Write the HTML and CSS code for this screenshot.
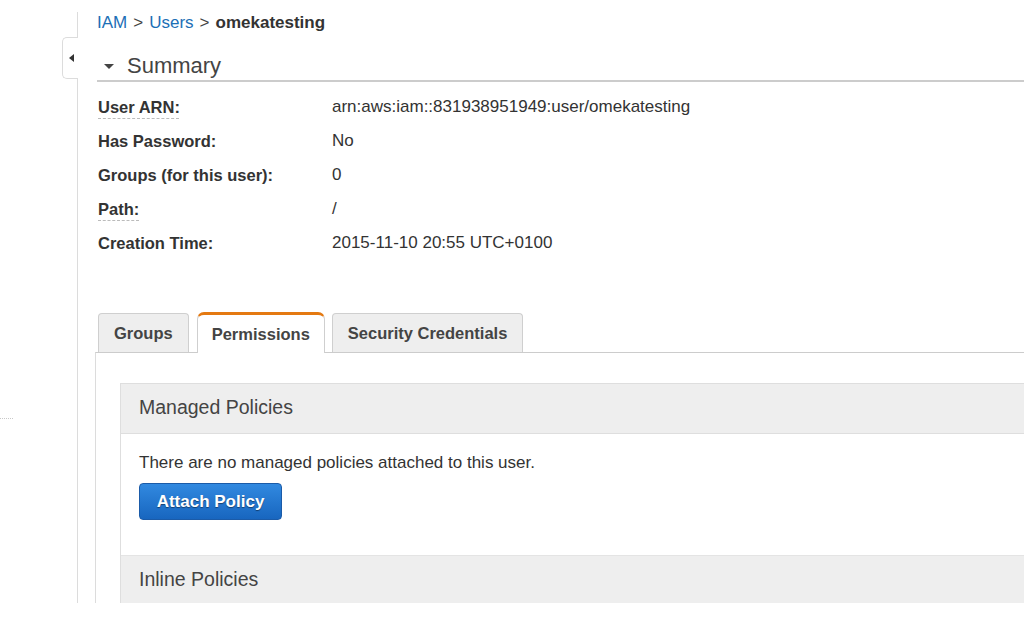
FILE: index.html
```html
<!DOCTYPE html>
<html>
<head>
<meta charset="utf-8">
<link rel="stylesheet" href="styles.css">
</head>
<body>
<div class="page">
  <aside class="left">
    <div class="left-dots"></div>
  </aside>
  <main class="main">
    <div class="collapse-tab"><span class="tri-left"></span></div>
    <nav class="crumbs">
      <a class="crumb-link">IAM</a><span class="sep">&gt;</span><a class="crumb-link">Users</a><span class="sep">&gt;</span><strong class="crumb-cur">omekatesting</strong>
    </nav>
    <h2 class="summary-head"><span class="tri-down"></span>Summary</h2>
    <div class="fields">
      <div class="row"><span class="label"><span class="dashed">User ARN:</span></span><span class="value">arn:aws:iam::831938951949:user/omekatesting</span></div>
      <div class="row"><span class="label">Has Password:</span><span class="value">No</span></div>
      <div class="row"><span class="label">Groups (for this user):</span><span class="value">0</span></div>
      <div class="row"><span class="label"><span class="dashed">Path:</span></span><span class="value">/</span></div>
      <div class="row"><span class="label">Creation Time:</span><span class="value">2015-11-10 20:55 UTC+0100</span></div>
    </div>
    <div class="tabs">
      <div class="tab">Groups</div>
      <div class="tab active">Permissions</div>
      <div class="tab">Security Credentials</div>
    </div>
    <div class="tab-content">
      <section class="panel">
        <div class="panel-head">Managed Policies</div>
        <div class="panel-body">
          <p class="empty">There are no managed policies attached to this user.</p>
          <button class="btn-primary">Attach Policy</button>
        </div>
        <div class="panel-head top">Inline Policies</div>
      </section>
    </div>
  </main>
</div>
</body>
</html>
```
FILE: styles.css
```css
html, body {
  margin: 0;
  padding: 0;
  background: #fff;
  font-family: "Liberation Sans", Arial, sans-serif;
  color: #333;
}
body {
  height: 622px;
  overflow: hidden;
}
.page {
  display: flex;
  height: 603px;
  overflow: hidden;
}
.left {
  width: 77px;
  flex: 0 0 77px;
  padding-top: 418px;
  box-sizing: border-box;
}
.left-dots {
  width: 13px;
  border-top: 1px dotted #c8c8c8;
}
.main {
  position: relative;
  flex: 1;
  margin-top: 12px;
  border-left: 1px solid #dcdcdc;
  padding-left: 17px;
  min-width: 0;
}
.collapse-tab {
  position: absolute;
  left: -16px;
  top: 25px;
  width: 15px;
  height: 40px;
  border: 1px solid #dcdcdc;
  border-right: none;
  border-radius: 5px 0 0 5px;
  background: #fff;
  display: flex;
  align-items: center;
  justify-content: center;
}
.tri-left {
  width: 0;
  height: 0;
  border-top: 4px solid transparent;
  border-bottom: 4px solid transparent;
  border-right: 5px solid #333;
  margin-left: 2px;
}
.crumbs {
  font-size: 17px;
  line-height: 20px;
  padding-top: 1px;
  padding-left: 2px;
  color: #444;
}
.crumb-link {
  color: #1c6fb6;
}
.sep {
  margin: 0 6px;
  color: #444;
}
.crumb-cur {
  color: #333;
}
.summary-head {
  margin: 18px 0 0 2px;
  font-size: 22px;
  font-weight: normal;
  line-height: 29px;
  color: #444;
  border-bottom: 2px solid #cccccc;
  display: flex;
  align-items: center;
}
.tri-down {
  width: 0;
  height: 0;
  border-left: 5px solid transparent;
  border-right: 5px solid transparent;
  border-top: 5px solid #444;
  margin: 2px 13px 0 7px;
}
.fields {
  margin-top: 8px;
  padding-left: 3px;
}
.row {
  display: flex;
  height: 34px;
  align-items: center;
  font-size: 17px;
}
.label {
  flex: 0 0 234px;
  font-weight: bold;
  font-size: 16.5px;
  color: #333;
}
.dashed {
  text-decoration: underline dashed #bbb;
  text-underline-offset: 5px;
  text-decoration-thickness: 1px;
}
.value {
  color: #333;
}
.tabs {
  display: flex;
  align-items: flex-end;
  margin-top: 52px;
  padding-left: 3px;
  height: 40px;
  position: relative;
  z-index: 1;
}
.tab {
  box-sizing: border-box;
  height: 39px;
  margin-right: 8px;
  padding: 0 15px;
  border: 1px solid #cfcfcf;
  border-bottom: none;
  border-radius: 4px 4px 0 0;
  background: #eeeeee;
  font-weight: bold;
  font-size: 16.5px;
  color: #444;
  display: flex;
  align-items: center;
}
.tab.active {
  background: #fff;
  height: 41px;
  border-top: 3px solid #e47911;
  border-radius: 7px 7px 0 0;
  margin-bottom: -1px;
  padding: 0 14px;
  margin-right: 7px;
}
.tab-content {
  border-top: 1px solid #cccccc;
  border-left: 1px solid #dcdcdc;
  padding: 30px 0 0 24px;
}
.panel {
  border: 1px solid #dedede;
  margin-right: -10px;
}
.panel-head {
  box-sizing: border-box;
  height: 50px;
  background: #eeeeee;
  border-bottom: 1px solid #dedede;
  padding: 0 0 3px 18px;
  font-size: 19.5px;
  color: #444;
  display: flex;
  align-items: center;
}
.panel-head.top {
  height: 50px;
  border-top: 1px solid #e4e4e4;
  border-bottom: none;
}
.panel-body {
  height: 121px;
  padding: 19px 0 0 18px;
  box-sizing: border-box;
}
.empty {
  margin: 0;
  font-size: 17px;
  line-height: 20px;
  color: #333;
}
.btn-primary {
  margin-top: 10px;
  width: 143px;
  height: 37px;
  border: 1px solid #1b5ba8;
  border-radius: 4px;
  background: linear-gradient(#3189e0, #1866bf);
  color: #fff;
  font-family: "Liberation Sans", Arial, sans-serif;
  font-weight: bold;
  font-size: 17px;
  text-shadow: 0 1px 1px rgba(0, 0, 0, 0.45);
  padding: 0;
}
```
